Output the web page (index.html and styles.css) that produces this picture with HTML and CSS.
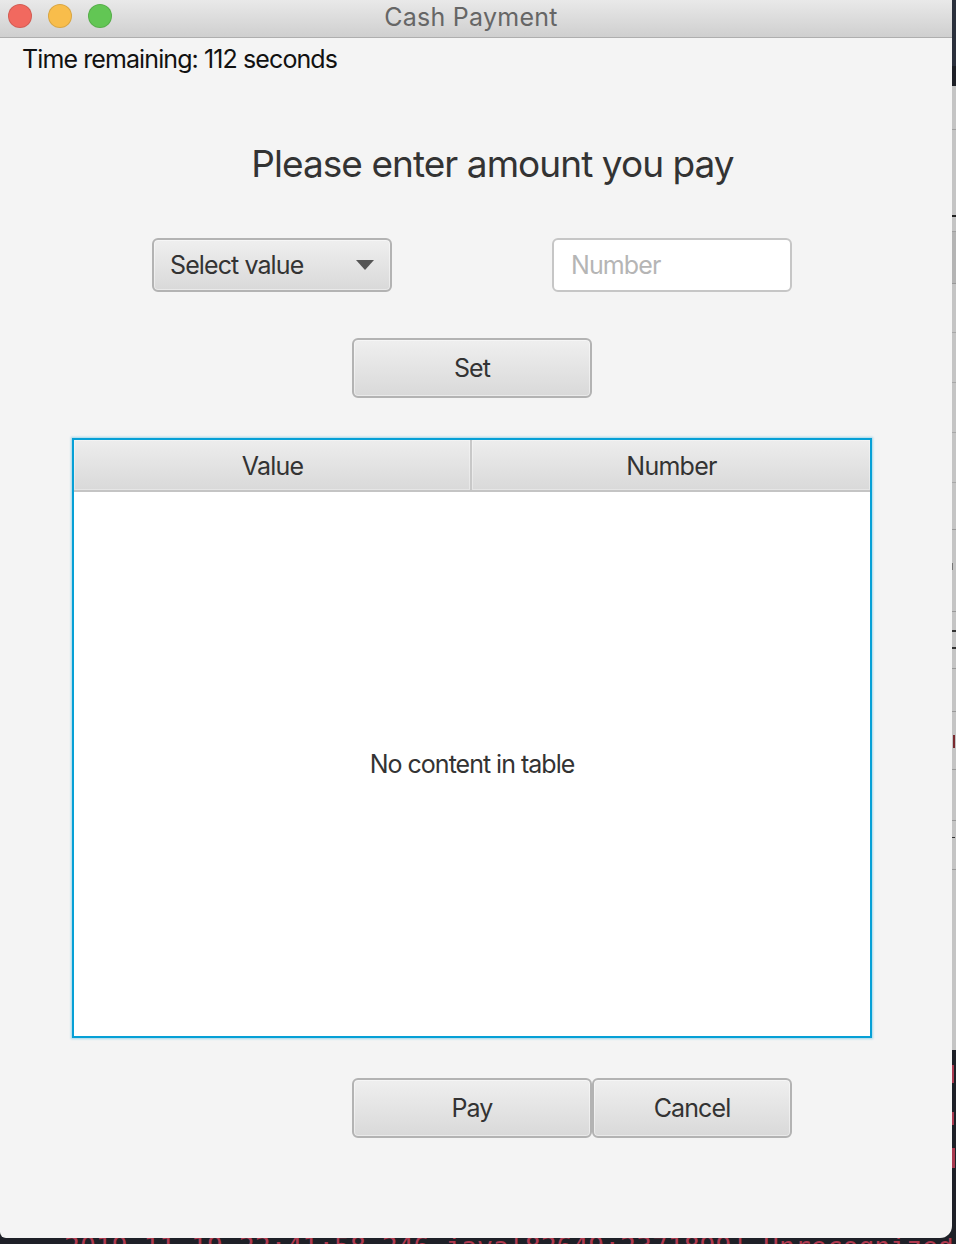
FILE: index.html
```html
<!DOCTYPE html>
<html lang="en">
<head>
    <meta charset="UTF-8">
    <title>Cash Payment</title>
    <link rel="stylesheet" href="styles.css">
</head>

<body>
    <!-- sliver of the windows behind, on the right edge -->
    <svg class="behind" width="4" height="1244" viewBox="0 0 4 1244">
        <rect y="0" width="4" height="66" fill="#2b303c"/>
        <rect y="86" width="4" height="964" fill="#c4c4c4"/>
        <rect y="129" width="4" height="1" fill="#a0a0a0"/>
        <rect y="215" width="4" height="2" fill="#222"/>
        <rect y="231" width="4" height="1" fill="#a0a0a0"/>
        <rect y="232" width="4" height="51" fill="#b4b4b4"/>
        <rect y="283" width="4" height="1" fill="#999"/>
        <rect y="332" width="4" height="1" fill="#a8a8a8"/>
        <rect y="382" width="4" height="1" fill="#a8a8a8"/>
        <rect y="432" width="4" height="1" fill="#a8a8a8"/>
        <rect y="482" width="4" height="1" fill="#a8a8a8"/>
        <rect y="529" width="4" height="1" fill="#999"/>
        <rect y="563" width="1" height="7" fill="#777"/>
        <rect y="611" width="4" height="1" fill="#999"/>
        <rect y="630" width="4" height="2" fill="#333"/>
        <rect y="647" width="4" height="2" fill="#333"/>
        <rect y="668" width="4" height="1" fill="#999"/>
        <rect y="711" width="4" height="1" fill="#999"/>
        <rect x="1" y="735" width="2" height="13" fill="#7a2a30"/>
        <rect y="769" width="4" height="1" fill="#999"/>
        <rect y="820" width="4" height="1" fill="#999"/>
        <rect y="837" width="3" height="1" fill="#333"/>
        <rect y="869" width="4" height="1" fill="#999"/>
        <rect x="0" y="1065" width="2" height="18" fill="#a83a50"/>
        <rect x="0" y="1112" width="2" height="13" fill="#a83a50"/>
        <rect x="0" y="1148" width="3" height="20" fill="#a83a50"/>
    </svg>

    <div class="window">
        <div class="titlebar">
            <div class="lights">
                <span class="light red"></span>
                <span class="light yellow"></span>
                <span class="light green"></span>
            </div>
            <div class="title">Cash Payment</div>
        </div>

        <div class="content">
            <p class="timer">Time remaining: 112 seconds</p>
            <h1 class="heading">Please enter amount you pay</h1>

            <div class="form_row">
                <div class="btn select">
                    <span>Select value</span>
                    <svg class="arrow" width="18" height="10" viewBox="0 0 18 10"><path d="M0 0H18L9 10Z" fill="#555"/></svg>
                </div>
                <div class="number_input">Number</div>
            </div>

            <div class="set_row">
                <div class="btn wide">Set</div>
            </div>

            <div class="table">
                <div class="table_head">
                    <div class="col">Value</div>
                    <div class="col">Number</div>
                </div>
                <div class="table_body">No content in table</div>
            </div>

            <div class="action_row">
                <div class="btn wide">Pay</div>
                <div class="btn cancel">Cancel</div>
            </div>
        </div>
    </div>

    <div class="log"><span>2019-11-19 22:41:58.246 java[82649:2371899] Unrecognized</span></div>
</body>
</html>
```

FILE: styles.css
```css
html, body {
    margin: 0;
    padding: 0;
}

body {
    position: relative;
    width: 956px;
    height: 1244px;
    overflow: hidden;
    background-color: #1e2027;
    font-family: "Inter", "Liberation Sans", sans-serif;
    color: #333;
}

.behind {
    position: absolute;
    top: 0;
    left: 952px;
}

.window {
    width: 952px;
    height: 1238px;
    background-color: #f4f4f4;
    border-radius: 0 0 12px 6px;
    overflow: hidden;
}

/* title bar */
.titlebar {
    position: relative;
    display: flex;
    align-items: center;
    justify-content: center;
    height: 37px;
    padding-right: 10px;
    background: linear-gradient(#e9e9e9, #cfcfcf);
    border-bottom: 1px solid #aeaeae;
}

.lights {
    position: absolute;
    top: 4px;
    left: 8px;
    display: flex;
    gap: 16px;
}

.light {
    box-sizing: border-box;
    width: 24px;
    height: 24px;
    border-radius: 50%;
    border: 1px solid rgba(0, 0, 0, 0.12);
}

.red { background-color: #f1695f; }
.yellow { background-color: #f8bd4b; }
.green { background-color: #62c654; }

.title {
    font-size: 25px;
    letter-spacing: 0.25px;
    color: #666;
    margin-top: -3px;
}

/* content */
.content {
    display: flex;
    flex-direction: column;
}

.timer {
    margin: 5px 0 0 22px;
    font-size: 25px;
    line-height: 32px;
    letter-spacing: -0.9px;
    color: #111;
}

.heading {
    margin: 64px 0 0 0;
    padding-left: 33px;
    text-align: center;
    font-size: 37px;
    line-height: 50px;
    font-weight: 400;
    letter-spacing: -0.95px;
}

.btn {
    box-sizing: border-box;
    display: flex;
    align-items: center;
    justify-content: center;
    border: 2px solid #b3b3b3;
    border-radius: 6px;
    background: linear-gradient(#efefef, #d9d9d9);
    box-shadow: inset 0 0 0 1px rgba(255, 255, 255, 0.45);
    font-size: 25px;
    letter-spacing: -0.9px;
}

.form_row {
    display: flex;
    gap: 160px;
    margin: 49px 0 0 152px;
}

.select {
    justify-content: space-between;
    width: 240px;
    height: 54px;
    padding: 0 16px;
}

.arrow {
    flex: none;
}

.number_input {
    box-sizing: border-box;
    display: flex;
    align-items: center;
    width: 240px;
    height: 54px;
    padding: 0 17px;
    background-color: #fff;
    border: 2px solid #c6c6c6;
    border-radius: 6px;
    font-size: 25px;
    letter-spacing: -0.9px;
    color: #b5b5b5;
}

.set_row {
    margin: 46px 0 0 352px;
}

.wide {
    width: 240px;
    height: 60px;
}

/* table */
.table {
    box-sizing: border-box;
    display: flex;
    flex-direction: column;
    width: 800px;
    height: 600px;
    margin: 40px 0 0 72px;
    border: 2px solid #06a0d6;
    box-shadow: 0 0 2px 1px rgba(6, 160, 214, 0.35);
    background-color: #fff;
}

.table_head {
    display: flex;
    height: 52px;
    box-sizing: border-box;
    border-bottom: 2px solid #c4c4c4;
}

.col {
    box-sizing: border-box;
    flex: none;
    width: 398px;
    display: flex;
    align-items: center;
    justify-content: center;
    padding: 2px 0 0 1px;
    background: linear-gradient(#ededed, #d9d9d9);
    border-right: 2px solid #c8c8c8;
    box-shadow: inset 0 0 0 1px rgba(255, 255, 255, 0.35);
    font-size: 25px;
    letter-spacing: -0.75px;
}

.col:last-child {
    flex: 1;
    border-right: none;
}

.table_body {
    flex: 1;
    display: flex;
    align-items: center;
    justify-content: center;
    font-size: 25px;
    letter-spacing: -1px;
}

.action_row {
    display: flex;
    margin: 40px 0 0 352px;
}

.cancel {
    width: 200px;
    height: 60px;
}

/* console text under the window, only the top of it shows */
.log {
    height: 6px;
    padding-left: 64px;
    overflow: hidden;
    font-family: "DejaVu Sans Mono", monospace;
    font-size: 26.4px;
    line-height: 17px;
    white-space: nowrap;
    color: #b03a50;
}
```
